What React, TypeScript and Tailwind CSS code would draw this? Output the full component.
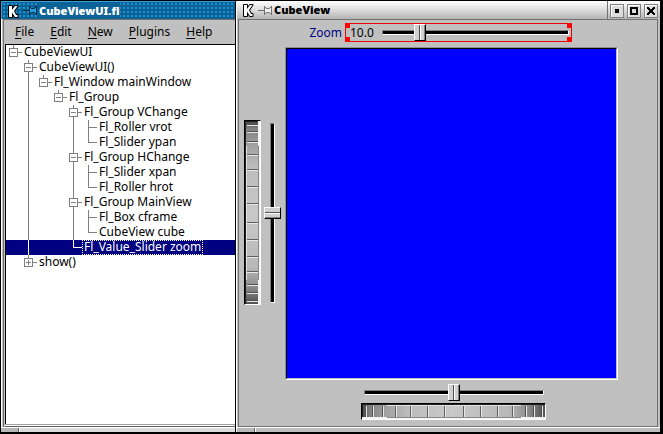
import { useState } from "react";
import type { ReactNode } from "react";

type Cell = "none" | "line" | "open" | "openMore" | "closed" | "tee" | "end";
type Item = { text: string; cells: Cell[] };

const items: Item[] = [
  { text: "CubeViewUI", cells: ["open"] },
  { text: "CubeViewUI()", cells: ["none", "openMore"] },
  { text: "Fl_Window mainWindow", cells: ["none", "line", "open"] },
  { text: "Fl_Group", cells: ["none", "line", "none", "open"] },
  { text: "Fl_Group VChange", cells: ["none", "line", "none", "none", "openMore"] },
  { text: "Fl_Roller vrot", cells: ["none", "line", "none", "none", "line", "tee"] },
  { text: "Fl_Slider ypan", cells: ["none", "line", "none", "none", "line", "end"] },
  { text: "Fl_Group HChange", cells: ["none", "line", "none", "none", "openMore"] },
  { text: "Fl_Slider xpan", cells: ["none", "line", "none", "none", "line", "tee"] },
  { text: "Fl_Roller hrot", cells: ["none", "line", "none", "none", "line", "end"] },
  { text: "Fl_Group MainView", cells: ["none", "line", "none", "none", "openMore"] },
  { text: "Fl_Box cframe", cells: ["none", "line", "none", "none", "line", "tee"] },
  { text: "CubeView cube", cells: ["none", "line", "none", "none", "line", "end"] },
  { text: "Fl_Value_Slider zoom", cells: ["none", "line", "none", "none", "end"] },
  { text: "show()", cells: ["none", "closed"] },
];

const paths: Record<Cell, string> = {
  none: "",
  line: "M7.5 0V15",
  tee: "M7.5 0V15M8 7.5H16",
  end: "M7.5 0V7.5H16",
  open: "M7.5 0V3M3.5 3.5H11.5V11.5H3.5ZM5 7.5H10M12 7.5H16",
  openMore: "M7.5 0V3M3.5 3.5H11.5V11.5H3.5ZM5 7.5H10M12 7.5H16M7.5 12V15",
  closed: "M7.5 0V3M3.5 3.5H11.5V11.5H3.5ZM5 7.5H10M7.5 5V10M12 7.5H16",
};

function Guide({ cell }: { cell: Cell }) {
  return (
    <svg className="h-[15px] w-[15px] shrink-0 overflow-visible" fill="none" stroke="currentColor" aria-hidden="true">
      <path d={paths[cell]} shapeRendering="crispEdges" />
    </svg>
  );
}

function KLogo() {
  return (
    <svg className="h-4 w-3 shrink-0" viewBox="0 0 12 16" aria-hidden="true">
      <path d="M2 3H5V7L8 3H10.500L7 8L9 12H10.500V14H8L5 9.500V14H2Z" fill="#fff" stroke="#000" strokeWidth="2" strokeLinejoin="round" />
      <path d="M2 3H5V7L8 3H10.500L7 8L9 12H10.500V14H8L5 9.500V14H2Z" fill="#fff" />
    </svg>
  );
}

function Pin({ color, fill }: { color: string; fill: string }) {
  return (
    <svg className="h-[11px] w-[15px] shrink-0" viewBox="0 0 15 11" fill="none" aria-hidden="true">
      <path d="M7 2L9 3.500H11L13 2V9L11 7.500H9L7 9Z" fill={fill} />
      <path d="M0 5.500H7M6.500 1V10M7 2.500L9 3.500H11L13 2M7 8.500L9 7.500H11L13 9M13.500 1V10" stroke={color} />
    </svg>
  );
}

function Handles({ className }: { className: string }) {
  return (
    <div className={`flex h-[5px] shrink-0 border-t border-white ${className}`}>
      <div className="w-[18px] border-r border-[#606060] bg-[#b8b8b8]" />
      <div className="flex-1 border-l border-white" />
    </div>
  );
}

function WindowButton({ label, children }: { label: string; children: ReactNode }) {
  return (
    <button
      aria-label={label}
      className="flex size-[14px] items-center justify-center border border-[#808080] bg-[#dcdcdc] shadow-[inset_1px_1px_#fff]"
    >
      <svg className="size-2" viewBox="0 0 8 8" shapeRendering="crispEdges" aria-hidden="true">
        {children}
      </svg>
    </button>
  );
}

const hSlider =
  "m-0 block h-[17px] appearance-none bg-transparent [&::-webkit-slider-runnable-track]:h-[5px] [&::-webkit-slider-runnable-track]:border [&::-webkit-slider-runnable-track]:border-t-[#808080] [&::-webkit-slider-runnable-track]:border-l-[#808080] [&::-webkit-slider-runnable-track]:border-b-white [&::-webkit-slider-runnable-track]:border-r-white [&::-webkit-slider-runnable-track]:bg-black [&::-webkit-slider-thumb]:-mt-[7px] [&::-webkit-slider-thumb]:h-[17px] [&::-webkit-slider-thumb]:w-3 [&::-webkit-slider-thumb]:appearance-none [&::-webkit-slider-thumb]:border [&::-webkit-slider-thumb]:border-t-white [&::-webkit-slider-thumb]:border-l-white [&::-webkit-slider-thumb]:border-b-black [&::-webkit-slider-thumb]:border-r-black [&::-webkit-slider-thumb]:bg-[linear-gradient(90deg,#d0d0d0_4px,#505050_4px_5px,#fff_5px_6px,#d0d0d0_6px_9px,#808080_9px)]";

const vSlider =
  "m-0 block w-[17px] appearance-none bg-transparent [writing-mode:vertical-lr] [&::-webkit-slider-runnable-track]:w-[5px] [&::-webkit-slider-runnable-track]:border [&::-webkit-slider-runnable-track]:border-t-[#808080] [&::-webkit-slider-runnable-track]:border-l-[#808080] [&::-webkit-slider-runnable-track]:border-b-white [&::-webkit-slider-runnable-track]:border-r-white [&::-webkit-slider-runnable-track]:bg-black [&::-webkit-slider-thumb]:-ml-[7px] [&::-webkit-slider-thumb]:h-3 [&::-webkit-slider-thumb]:w-[17px] [&::-webkit-slider-thumb]:appearance-none [&::-webkit-slider-thumb]:border [&::-webkit-slider-thumb]:border-t-white [&::-webkit-slider-thumb]:border-l-white [&::-webkit-slider-thumb]:border-b-black [&::-webkit-slider-thumb]:border-r-black [&::-webkit-slider-thumb]:bg-[linear-gradient(180deg,#d0d0d0_4px,#505050_4px_5px,#fff_5px_6px,#d0d0d0_6px_9px,#808080_9px)]";

const ridges = [4, 11, 21, 34, 49, 66, 83, 102, 119, 136, 151, 164, 172, 180];

function Roller({ vertical, label }: { vertical?: boolean; label: string }) {
  return (
    <label className={`relative block border border-t-black border-l-black border-b-white border-r-white ${vertical ? "h-[185px] w-[17px]" : "h-[17px] w-[185px]"}`}>
      <svg className="block size-full" viewBox={vertical ? "0 0 15 183" : "0 0 183 15"} preserveAspectRatio="none" shapeRendering="crispEdges" aria-hidden="true">
        <defs>
          <linearGradient id={vertical ? "rollV" : "rollH"} x2={vertical ? "0" : "1"} y2={vertical ? "1" : "0"}>
            <stop offset="0" stopColor="#404040" />
            <stop offset=".04" stopColor="#808080" />
            <stop offset=".13" stopColor="#a0a0a0" />
            <stop offset=".25" stopColor="#bcbcbc" />
            <stop offset=".5" stopColor="#c8c8c8" />
            <stop offset=".8" stopColor="#b8b8b8" />
            <stop offset=".9" stopColor="#909090" />
            <stop offset="1" stopColor="#505050" />
          </linearGradient>
        </defs>
        <rect width="100%" height="100%" fill={vertical ? "url(#rollV)" : "url(#rollH)"} />
        <g transform={vertical ? undefined : "matrix(0 1 1 0 0 0)"}>
          {ridges.map((p) => (
            <g key={p}>
              <rect x="2" y={p - 1} width="11" height="1" fill={p > 25 && p < 160 ? "#606060" : "#505050"} />
              <rect x="2" y={p} width="11" height="1" fill="#e8e8e8" />
            </g>
          ))}
          <path d="M.5 0V183M0 .5H15" stroke="#202020" />
          <path d="M1.5 25V159" stroke="#e0e0e0" />
          <path d="M13.5 25V159" stroke="#888" />
          <path d="M14.5 0V183M13.5 0V25M13.5 159V183" stroke="#f4f4f4" />
        </g>
      </svg>
      <input type="range" aria-label={label} className="absolute inset-0 m-0 size-full cursor-pointer opacity-0" />
    </label>
  );
}

export default function App() {
  const [selected, setSelected] = useState(13);
  const [zoom, setZoom] = useState(10);
  return (
    <div className="flex min-h-screen bg-black font-['Noto_Sans',sans-serif] text-xs text-black">
      <section className="flex w-[235px] shrink-0 flex-col pt-px pb-0.5 pl-px">
        <header className="flex h-[18px] shrink-0 items-center border-t border-l border-[#3aa0d8] bg-[#0b6296] bg-[radial-gradient(circle,#2090cc_0.8px,transparent_1px)] bg-size-[4px_4px] pl-[5px]">
          <KLogo />
          <span className="flex w-[19px] justify-center pl-1"><Pin color="#052c48" fill="#2a9ad8" /></span>
          <h1 className="bg-[#0b6296] pl-px text-[11px] leading-4 font-black text-white">CubeViewUI.fl</h1>
        </header>
        <div className="flex flex-1 flex-col border-l border-white bg-[#c0c0c0] pl-px">
          <nav className="flex h-[25px] shrink-0 items-center gap-4 border-t border-l border-[#707070] pb-px pl-[11px]">
            {["File", "Edit", "New", "Plugins", "Help"].map((name) => (
              <button key={name}>
                <span className="underline underline-offset-2">{name[0]}</span>
                {name.slice(1)}
              </button>
            ))}
          </nav>
          <div className="flex flex-1 flex-col border-l border-[#707070] pl-px">
            <div role="tree" aria-label="Widgets" className="flex-1 border-t border-l border-black bg-white">
              {items.map((item, i) => (
                <button
                  key={i}
                  role="treeitem"
                  aria-selected={i === selected}
                  onClick={() => setSelected(i)}
                  className={`flex h-[15px] w-full items-center ${i === selected ? "bg-[#000080] text-white" : ""}`}
                >
                  <span className={`flex ${i === selected ? "text-white" : "text-[#808080]"}`}>
                    {item.cells.map((cell, n) => (
                      <Guide key={n} cell={cell} />
                    ))}
                  </span>
                  <span className={`ml-px h-[15px] border border-dotted px-px leading-[11px] whitespace-nowrap ${i === selected ? "border-white" : "border-transparent"}`}>
                    {item.text}
                  </span>
                </button>
              ))}
            </div>
            <div className="h-[3px] border-t border-b border-t-[#a0a0a0] border-b-[#606060] bg-white" />
          </div>
        </div>
        <Handles className="bg-[#dcdcdc]" />
      </section>

      <section className="ml-px flex min-w-0 flex-1 flex-col pt-px pr-[3px] pb-0.5">
        <header className="flex h-[18px] shrink-0 items-center border-l border-white bg-linear-to-b from-white via-[#dcdcdc] to-[#b4b4b4] pl-[5px]">
          <KLogo />
          <span className="flex w-[19px] justify-center pl-1"><Pin color="#707070" fill="#f0f0f0" /></span>
          <h2 className="flex-1 pl-px text-[11px] leading-4 font-black">CubeView</h2>
          <div className="flex h-full items-center gap-[3px] border-l border-[#707070] px-0.5 pt-px">
            <WindowButton label="Minimize"><path d="M2 2H6V6H2Z" /></WindowButton>
            <WindowButton label="Maximize"><path d="M0 0H8V8H0ZM2 2V6H6V2Z" fillRule="evenodd" /></WindowButton>
            <WindowButton label="Close"><path d="M0 0H2V1H3V2H5V1H6V0H8V2H7V3H6V5H7V6H8V8H6V7H5V6H3V7H2V8H0V6H1V5H2V3H1V2H0Z" /></WindowButton>
          </div>
        </header>
        <div className="flex flex-1 flex-col border-l border-white bg-[#c0c0c0] pr-0.5 pl-px">
          <main className="flex flex-1 flex-col border border-[#707070] pt-[3px]">
            <div className="flex items-center justify-end pr-[85px]">
              <label htmlFor="zoom" className="pr-[3px] text-[#000080]">Zoom</label>
              <div className="relative flex h-[19px] w-[227px] items-center border border-red-600 pr-0.5 pl-1">
                <output htmlFor="zoom" className="w-8">{zoom.toFixed(1)}</output>
                <input id="zoom" type="range" min="1" max="52" step="0.1" value={zoom} onChange={(e) => setZoom(Number(e.target.value))} className={`min-w-0 flex-1 ${hSlider}`} />
                <i className="absolute -top-px -left-px size-[5px] bg-[#ff0000]" />
                <i className="absolute -bottom-px -left-px size-[5px] bg-[#ff0000]" />
                <i className="absolute -top-px -right-px size-[5px] bg-[#ff0000]" />
                <i className="absolute -right-px -bottom-px size-[5px] bg-[#ff0000]" />
              </div>
            </div>
            <div className="flex flex-1 pt-[5px] pr-[39px]">
              <div className="flex w-[46px] shrink-0 items-center gap-[3px] pb-0.5 pl-[5px]">
                <Roller vertical label="vrot" />
                <input type="range" aria-label="ypan" className={`h-[180px] ${vSlider}`} />
              </div>
              <div className="flex-1 border border-[#909090] border-r-white border-b-white">
                <div className="h-full border border-black border-r-[#c0c0c0] border-b-[#c0c0c0] bg-[#0000ff]" />
              </div>
            </div>
            <div className="flex flex-col items-center gap-0.5 pt-1 pb-1.5 pl-[11px]">
              <input type="range" aria-label="xpan" className={`w-[180px] ${hSlider}`} />
              <Roller label="hrot" />
            </div>
          </main>
        </div>
        <Handles className="border-l bg-[#c0c0c0]" />
      </section>
    </div>
  );
}
